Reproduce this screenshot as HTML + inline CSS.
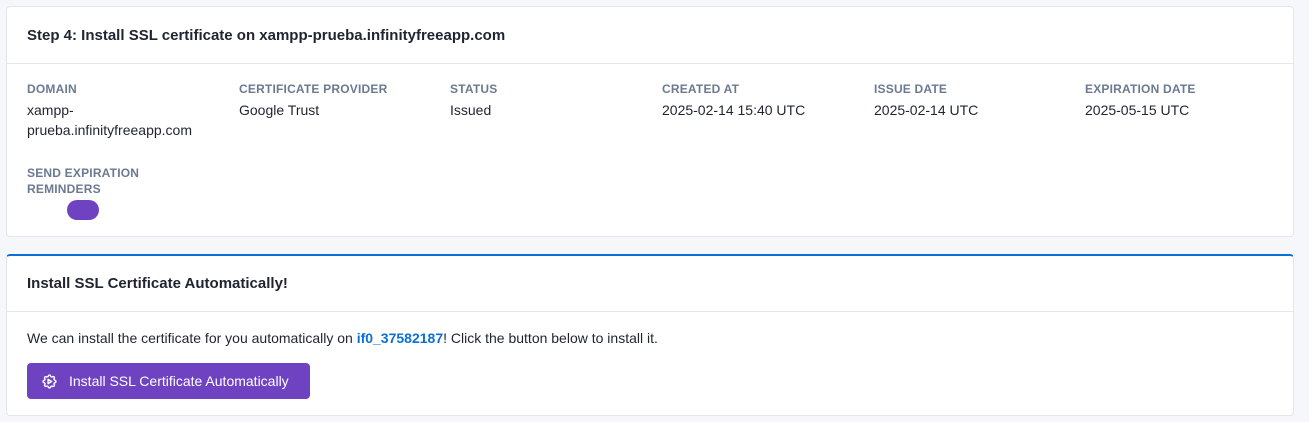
<!DOCTYPE html>
<html><head><style>
*{box-sizing:border-box;margin:0;padding:0}
body{width:1309px;height:422px;background:#f5f7fb;font-family:"Liberation Sans",sans-serif;color:#1e293b;font-size:14px;position:relative;overflow:hidden}
.card{position:absolute;left:6px;width:1288px;background:#fff;border:1px solid #e3e6ec;border-radius:4px}
.hd{height:57px;border-bottom:1px solid #e6e8ed;padding:0 20px;display:flex;align-items:center;font-size:15px;font-weight:bold;color:#1f2430}
.lbl{position:absolute;font-size:12px;font-weight:bold;color:#6b7a90;letter-spacing:.2px;line-height:16px;text-transform:uppercase}
.val{position:absolute;font-size:14px;color:#1f2430;line-height:20px}
</style></head><body>
<div class="card" style="top:6px;height:231px">
<div class="hd">Step 4: Install SSL certificate on xampp-prueba.infinityfreeapp.com</div>
<div class="lbl" style="left:20px;top:74px">Domain</div>
<div class="val" style="left:20px;top:93px;width:190px">xampp-<br>prueba.infinityfreeapp.com</div>
<div class="lbl" style="left:232px;top:74px">Certificate Provider</div>
<div class="val" style="left:232px;top:93px">Google Trust</div>
<div class="lbl" style="left:443px;top:74px">Status</div>
<div class="val" style="left:443px;top:93px">Issued</div>
<div class="lbl" style="left:655px;top:74px">Created At</div>
<div class="val" style="left:655px;top:93px">2025-02-14 15:40 UTC</div>
<div class="lbl" style="left:867px;top:74px">Issue Date</div>
<div class="val" style="left:867px;top:93px">2025-02-14 UTC</div>
<div class="lbl" style="left:1078px;top:74px">Expiration Date</div>
<div class="val" style="left:1078px;top:93px">2025-05-15 UTC</div>
<div class="lbl" style="left:20px;top:158px">Send Expiration<br>Reminders</div>
<div style="position:absolute;left:60px;top:193px;width:32px;height:20px;border-radius:10px;background:#6f42c1"></div>
</div>
<div class="card" style="top:254px;height:162px;border-top:2px solid #0b6fd6">
<div class="hd" style="height:56px">Install SSL Certificate Automatically!</div>
<div class="val" style="left:20px;top:72px">We can install the certificate for you automatically on <b style="color:#0b6fd6">if0_37582187</b>! Click the button below to install it.</div>
<div style="position:absolute;left:20px;top:107px;width:283px;height:36px;background:#6f42c1;border-radius:4px;color:#fff;font-size:14px;display:flex;align-items:center;padding-left:14px">
<svg width="17" height="17" viewBox="0 0 24 24" fill="none" stroke="#fff" stroke-width="2" stroke-linejoin="round" style="margin-right:11px"><path d="M10.3 4.3c.4-1.8 3-1.8 3.4 0a1.7 1.7 0 0 0 2.6 1c1.5-.9 3.3.8 2.4 2.4a1.7 1.7 0 0 0 1 2.6c1.8.4 1.8 3 0 3.4a1.7 1.7 0 0 0-1 2.6c.9 1.5-.8 3.3-2.4 2.4a1.7 1.7 0 0 0-2.6 1c-.4 1.8-3 1.8-3.4 0a1.7 1.7 0 0 0-2.6-1c-1.5.9-3.3-.8-2.4-2.4a1.7 1.7 0 0 0-1-2.6c-1.8-.4-1.8-3 0-3.4a1.7 1.7 0 0 0 1-2.6c-.9-1.5.8-3.3 2.4-2.4a1.7 1.7 0 0 0 2.6-1z"/><path d="M10 9v6l5-3z"/></svg>
Install SSL Certificate Automatically</div>
</div>
</body></html>
